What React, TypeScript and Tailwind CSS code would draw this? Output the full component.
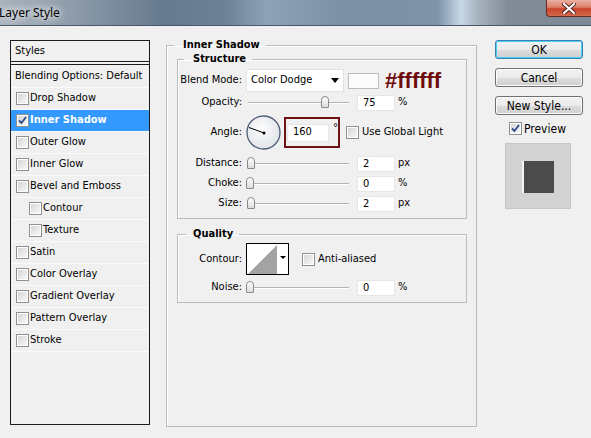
import React from "react";

function Check({ checked }: { checked?: boolean }) {
  return (
    <span className="w-[13px] h-[13px] shrink-0 border border-[#8f8f8f] bg-white p-[1px] flex">
      <span className="flex-1 bg-[linear-gradient(135deg,#d6d6d6,#f7f7f7)] flex items-center justify-center">
        {checked && (
          <svg width="9" height="9" viewBox="0 0 9 9">
            <path d="M1 4.5 L3.5 7 L8 1" fill="none" stroke="#2a4a8c" strokeWidth="1.8" />
          </svg>
        )}
      </span>
    </span>
  );
}

function StyleRow({ label, checked, sub, selected }: { label: string; checked?: boolean; sub?: boolean; selected?: boolean }) {
  return (
    <div className={`h-[22px] border-t border-[#fbfbfb] flex items-center ${sub ? "pl-[18px]" : "pl-[5px]"} ${selected ? "bg-[#3399ff] text-white font-bold" : ""}`}>
      <Check checked={checked} />
      <span className="ml-[1px]">{label}</span>
    </div>
  );
}

function Slider({ thumb }: { thumb: string }) {
  return (
    <div className="relative w-[102px] h-[15px] shrink-0">
      <div className="absolute left-[1px] right-0 top-[7px] h-[2px] border-t border-[#b4b4b4] bg-white" />
      <div className={`absolute top-[1px] w-[8px] h-[12px] rounded-t-[4px] rounded-b-[1px] border border-[#8a8a8a] bg-[linear-gradient(180deg,#ffffff,#dcdcdc)] ${thumb}`} />
    </div>
  );
}

function NumBox({ value }: { value: string }) {
  return (
    <div className="w-[38px] h-[16px] shrink-0 bg-white border border-[#e6e6e6] pl-[5px] flex items-center leading-none">{value}</div>
  );
}

function Label({ children }: { children: React.ReactNode }) {
  return <div className="w-[64px] shrink-0 text-right">{children}</div>;
}

function SliderRow({ label, thumb, value, unit }: { label: string; thumb: string; value: string; unit: string }) {
  return (
    <div className="mt-[5px] h-[15px] flex items-center">
      <Label>{label}</Label>
      <div className="ml-[5px]">
        <Slider thumb={thumb} />
      </div>
      <div className="ml-[8px]">
        <NumBox value={value} />
      </div>
      <span className="ml-[3px]">{unit}</span>
    </div>
  );
}

function Button({ children, primary }: { children: React.ReactNode; primary?: boolean }) {
  return (
    <div
      className={`h-[19px] w-[88px] rounded-[3px] border flex items-center justify-center text-[12px] bg-[linear-gradient(180deg,#f2f2f2_0%,#ebebeb_50%,#dddddd_51%,#cfcfcf_100%)] ${
        primary
          ? "border-[#3c7fb1] shadow-[inset_0_0_0_1px_#48d0f6]"
          : "border-[#707070] shadow-[inset_0_0_0_1px_#fcfcfc]"
      }`}
    >
      {children}
    </div>
  );
}

export default function App() {
  return (
    <div className="w-[591px] h-[438px] overflow-hidden bg-[#f0f0f0] text-[11px] text-black font-['DejaVu_Sans_Condensed','DejaVu_Sans',sans-serif] flex flex-col">
      {/* title bar */}
      <div className="h-[26px] shrink-0 border-b border-[#485868] bg-[linear-gradient(90deg,#aab4be_0%,#8e9cab_12%,#66798d_28%,#6d8196_38%,#8ea2b6_45%,#7b8fa5_58%,#7e92a8_74%,#c7d8e8_78%,#a6b2bd_81%,#808b97_86%,#7f8a96_100%)] flex items-start">
        <div className="h-[25px] flex items-center -ml-[1px] text-[12px] font-['Noto_Sans',sans-serif] [text-shadow:0_0_6px_#ffffff,0_0_10px_#ffffff]">Layer Style</div>
        <div className="ml-auto w-[45px] h-[17px] rounded-bl-[4px] border-l border-b border-[#6b2a22] bg-[linear-gradient(180deg,#eab0a2_0%,#dc7f69_45%,#c9452a_55%,#d46a4f_100%)] flex items-center justify-center">
          <svg width="14" height="11" viewBox="0 0 14 11">
            <path d="M2 1 L12 10 M12 1 L2 10" stroke="#5a2a26" strokeWidth="4" strokeLinecap="square" />
            <path d="M2 1 L12 10 M12 1 L2 10" stroke="#ffffff" strokeWidth="2" strokeLinecap="square" />
          </svg>
        </div>
      </div>

      <div className="flex items-start pt-[12px] pl-[10px]">
        {/* styles list */}
        <div className="mt-[2px] w-[140px] h-[385px] border border-[#1c1c1c] flex flex-col">
          <div className="h-[21px] pl-[4px] flex items-center border-b border-[#1c1c1c]">Styles</div>
          <div className="h-[2px]" />
          <div className="border-t border-[#1c1c1c]">
            <div className="h-[22px] pl-[4px] flex items-center">Blending Options: Default</div>
            <StyleRow label="Drop Shadow" />
            <StyleRow label="Inner Shadow" checked selected />
            <StyleRow label="Outer Glow" />
            <StyleRow label="Inner Glow" />
            <StyleRow label="Bevel and Emboss" />
            <StyleRow label="Contour" sub />
            <StyleRow label="Texture" sub />
            <StyleRow label="Satin" />
            <StyleRow label="Color Overlay" />
            <StyleRow label="Gradient Overlay" />
            <StyleRow label="Pattern Overlay" />
            <StyleRow label="Stroke" />
            <div className="border-t border-[#fbfbfb]" />
          </div>
        </div>

        {/* settings */}
        <fieldset className="ml-[16px] w-[311px] h-[389px] border border-[#bcbcbc] shadow-[inset_1px_1px_0_#ffffff]">
          <legend className="ml-[7px] pl-[9px] pr-[6px] h-[14px] leading-[14px] font-bold">Inner Shadow</legend>

          <fieldset className="ml-[10px] w-[290px] border border-[#bcbcbc] pb-[7px] shadow-[inset_1px_1px_0_#ffffff]">
            <legend className="ml-[6px] pl-[9px] pr-[6px] h-[14px] leading-[14px] font-bold">Structure</legend>

            <div className="mt-[3px] h-[23px] flex items-center">
              <Label>Blend Mode:</Label>
              <div className="ml-[4px] w-[98px] h-[23px] shrink-0 bg-white border border-[#e2e2e2] pl-[4px] pr-[4px] flex items-center">
                <span>Color Dodge</span>
                <svg className="ml-auto" width="8" height="5" viewBox="0 0 8 5">
                  <path d="M0 0 H8 L4 5 Z" fill="#000" />
                </svg>
              </div>
              <div className="ml-[4px] w-[31px] h-[16px] shrink-0 bg-[#fbfbfb] border border-[#bdbdbd]" />
              <span className="ml-[6px] text-[22px] leading-none font-bold text-[#6e0b0b] font-['Liberation_Sans',sans-serif]">#ffffff</span>
            </div>

            <div className="mt-[3px] h-[15px] flex items-center">
              <Label>Opacity:</Label>
              <div className="ml-[5px]">
                <Slider thumb="left-[74px]" />
              </div>
              <div className="ml-[8px]">
                <NumBox value="75" />
              </div>
              <span className="ml-[3px]">%</span>
            </div>

            <div className="mt-[4px] h-[37px] flex items-center">
              <Label>Angle:</Label>
              <svg className="ml-[4px] shrink-0" width="35" height="35" viewBox="0 0 35 35">
                <defs>
                  <radialGradient id="dial" cx="45%" cy="40%" r="60%">
                    <stop offset="0%" stopColor="#ffffff" />
                    <stop offset="100%" stopColor="#dfe3e8" />
                  </radialGradient>
                </defs>
                <circle cx="17.5" cy="17.5" r="16.5" fill="url(#dial)" stroke="#4f5f76" strokeWidth="1.3" />
                <path d="M18 18 L3 12.5" stroke="#000" strokeWidth="1" />
                <circle cx="18" cy="18" r="1.5" fill="#000" />
              </svg>
              <div className="ml-[3px] w-[56px] h-[31px] shrink-0 border-2 border-[#6e1216] pl-[1px] flex items-center">
                <div className="w-[42px] h-[18px] bg-white border border-[#e6e6e6] pl-[5px] flex items-center">160</div>
                <span className="ml-[4px] -mt-[8px]">°</span>
              </div>
              <div className="ml-[6px]">
                <Check />
              </div>
              <span className="ml-[3px]">Use Global Light</span>
            </div>

            <SliderRow label="Distance:" thumb="left-0" value="2" unit="px" />
            <SliderRow label="Choke:" thumb="-left-[1px]" value="0" unit="%" />
            <SliderRow label="Size:" thumb="left-0" value="2" unit="px" />
          </fieldset>

          <fieldset className="mt-[8px] ml-[10px] w-[290px] border border-[#bcbcbc] pb-[7px] shadow-[inset_1px_1px_0_#ffffff]">
            <legend className="ml-[8px] pl-[7px] pr-[6px] h-[14px] leading-[14px] font-bold">Quality</legend>

            <div className="mt-[2px] h-[32px] flex items-center">
              <Label>Contour:</Label>
              <svg className="ml-[4px] shrink-0" width="43" height="32" viewBox="0 0 43 32">
                <rect x="0.5" y="0.5" width="42" height="31" fill="#ffffff" stroke="#000" />
                <path d="M2 31 L31 2 V31 Z" fill="#a3a3a3" />
                <path d="M34 13 H40 L37 16 Z" fill="#000" />
              </svg>
              <div className="ml-[13px]">
                <Check />
              </div>
              <span className="ml-[3px]">Anti-aliased</span>
            </div>

            <SliderRow label="Noise:" thumb="-left-[1px]" value="0" unit="%" />
          </fieldset>
        </fieldset>

        {/* buttons */}
        <div className="mt-[2px] ml-[18px] w-[88px] flex flex-col">
          <Button primary>OK</Button>
          <div className="mt-[9px]">
            <Button>Cancel</Button>
          </div>
          <div className="mt-[9px]">
            <Button>New Style...</Button>
          </div>
          <div className="mt-[7px] h-[13px] pl-[14px] flex items-center text-[12px]">
            <Check checked />
            <span className="ml-[2px]">Preview</span>
          </div>
          <div className="mt-[8px] ml-[10px] w-[66px] h-[66px] bg-[#d3d3d3] border border-[#c6c6c6] pt-[17px] pl-[16px]">
            <div className="w-[32px] h-[32px] bg-[#4b4b4b] border-l-2 border-[#f4f4f4]" />
          </div>
        </div>
      </div>
    </div>
  );
}
